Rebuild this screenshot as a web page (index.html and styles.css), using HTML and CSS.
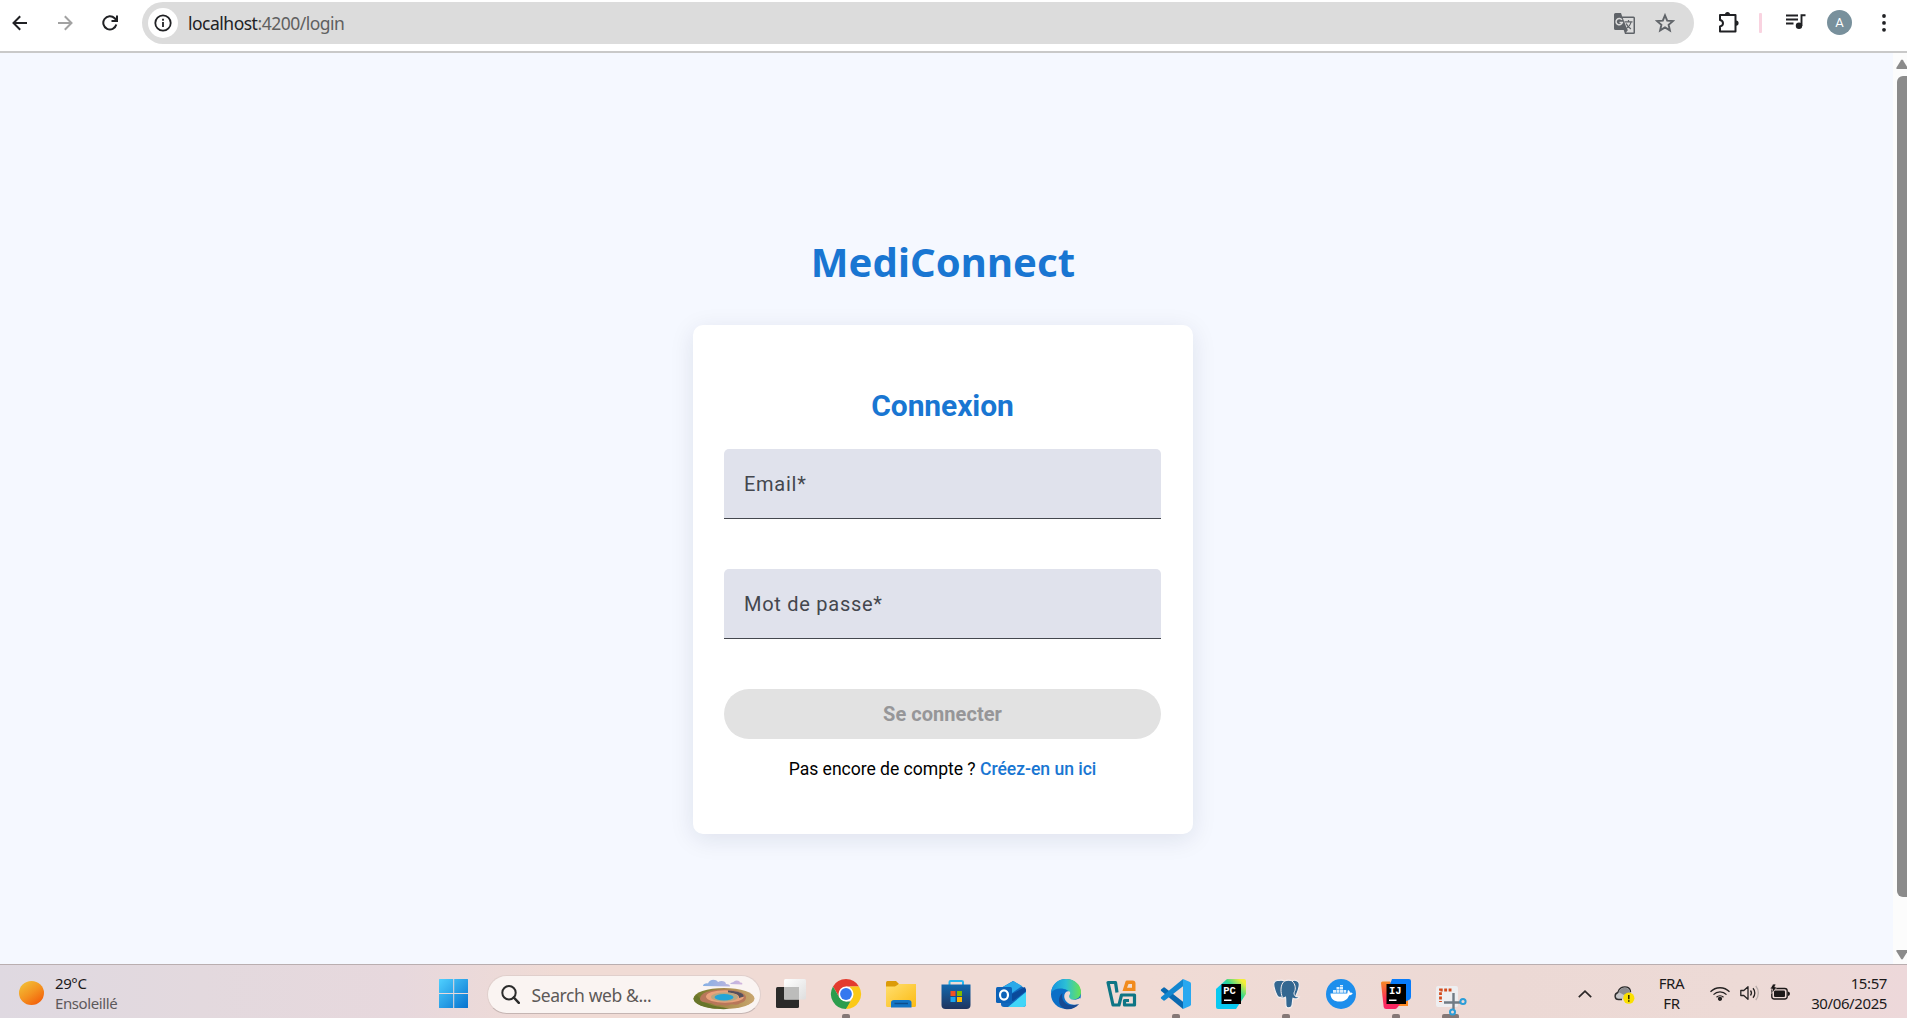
FILE: index.html
```html
<!DOCTYPE html>
<html lang="fr">
<head>
<meta charset="utf-8">
<title>MediConnect</title>
<link rel="stylesheet" href="styles.css">
</head>
<body>
<header class="toolbar">
  <div class="nav">
    <svg width="16" height="16" viewBox="0 0 16 16" class="line"><path d="M15 8H2M8.200 1.200L1.500 8l6.700 6.800"/></svg>
    <svg width="16" height="16" viewBox="0 0 16 16" class="line faded"><path d="M1 8h13M7.800 1.200L14.500 8l-6.700 6.800"/></svg>
    <svg width="16" height="16" viewBox="0 0 16 16" class="line"><path d="M14.300 9.500A6.600 6.600 0 1 1 12.700 3.300L14.500 5.200M15 .5v5.500H9.500" /></svg>
  </div>
  <div class="omnibox">
    <span class="site-info"><svg width="18" height="18" viewBox="0 0 18 18" fill="none" stroke="#202124" stroke-width="1.800"><circle cx="9" cy="9" r="7.700"/><path d="M9 8v5M9 4.800v1.900"/></svg></span>
    <span class="url"><b>localhost</b>:4200/login</span>
    <svg class="translate" width="21" height="21" viewBox="0 0 21 21"><path fill="#5f6368" d="M1.500 0H7l1.200 3.600h11.300A1.500 1.500 0 0 1 21 5.100v14.400a1.500 1.500 0 0 1-1.500 1.500H11l-1.300-4H1.500A1.500 1.500 0 0 1 0 15.500v-14A1.500 1.500 0 0 1 1.500 0z"/><path fill="#dcdcdc" d="M8.800 5h10.700v14.600H12l2-2.600-1-1z"/><path fill="none" stroke="#dcdcdc" stroke-width="1.500" d="M7.900 6.800A3.200 3.200 0 1 0 8.300 9.600H5.500"/><path fill="none" stroke="#5f6368" stroke-width="1.200" d="M10.500 8.800h8M14.500 7v1.800M17 9c-.6 3-2.500 5.200-5 6.500M12.200 10.500c1 2.500 2.500 4.300 4.800 5.500"/></svg>
    <svg class="star" width="20" height="20" viewBox="0 0 20 20"><path fill="none" stroke="#5f6368" stroke-width="1.900" d="M10 2.300l2.200 5.300 5.700.5-4.300 3.700 1.300 5.600-4.900-3-4.900 3 1.300-5.600L2.100 8.100l5.700-.5z"/></svg>
  </div>
  <div class="actions">
    <svg width="21" height="21" viewBox="0 0 21 21"><path fill="none" stroke="#202124" stroke-width="2" stroke-linejoin="round" d="M2 3h15.500v16.500H2v-5c4-1 4-5.500 0-6.500z"/><path fill="#202124" d="M7 2.500a2.500 2.500 0 0 1 5 0zM18 8.500a2.600 2.600 0 0 1 0 5.200z"/></svg>
    <i class="divider"></i>
    <svg class="media" width="20" height="15" viewBox="0 0 20 15"><path stroke="#202124" stroke-width="1.900" fill="none" d="M0 1.500h12M0 5.500h12M0 9.500h7.500M15.500 12V1.200H19.500"/><circle cx="13" cy="11.700" r="3.200" fill="#202124"/></svg>
    <span class="avatar">A</span>
    <svg class="dots" width="4" height="18" viewBox="0 0 4 18" fill="#202124"><circle cx="2" cy="2" r="1.900"/><circle cx="2" cy="8.900" r="1.900"/><circle cx="2" cy="15.800" r="1.900"/></svg>
  </div>
</header>

<div class="viewport">
  <main class="page">
    <h1 class="brand">MediConnect</h1>
    <form class="card">
      <h2 class="card-title">Connexion</h2>
      <label class="field">Email*</label>
      <label class="field">Mot de passe*</label>
      <button type="button" class="submit" disabled>Se connecter</button>
      <p class="signup">Pas encore de compte ? <a>Créez-en un ici</a></p>
    </form>
  </main>
  <div class="scrollbar">
    <svg width="11" height="10" viewBox="0 0 11 10"><path fill="#8b8b8b" d="M.5 8.500L5 1.200q1-1.400 2 0l4.500 7.300q.5 1.500-1 1.500H1Q-.2 9.700.5 8.500z"/></svg>
    <i class="thumb"></i>
    <svg width="11" height="10" viewBox="0 0 11 10"><path fill="#8b8b8b" d="M.5 1.500L5 8.800q1 1.400 2 0l4.500-7.300Q12 0 10.500 0H1Q-.2.300.5 1.500z"/></svg>
  </div>
</div>

<footer class="taskbar">
  <div class="weather">
    <i class="sun"></i>
    <div class="weather-text"><span>29°C</span><span class="muted">Ensoleillé</span></div>
  </div>

  <div class="apps">
    <svg class="app" viewBox="0 0 30 30"><defs><linearGradient id="win" x1="0" y1="0" x2="1" y2="1" gradientUnits="objectBoundingBox"><stop offset="0" stop-color="#4fd0ff"/><stop offset="1" stop-color="#0672cf"/></linearGradient></defs><path fill="url(#win)" d="M.5 0h13.700v14H0V.5zM15.200 0H28.500a.5.500 0 0 1 .5.500v13.500H15.200zM0 15h14.200v14H.5a.5.500 0 0 1-.5-.5zM15.200 15h13.800V28.500a.5.500 0 0 1-.5.500H15.200z"/></svg>

    <div class="search">
      <svg width="19" height="19" viewBox="0 0 19 19" fill="none" stroke="#2b2b2b"><circle cx="8" cy="7.700" r="6.700" stroke-width="2"/><path d="M12.800 12.500l5 5.300" stroke-width="2.500" stroke-linecap="round"/></svg>
      <span class="search-text">Search web &amp;...</span>
      <svg class="spring" width="62" height="31" viewBox="0 0 62 31">
        <defs><linearGradient id="cl" x1="0" x2="1"><stop offset="0" stop-color="#86b0e4"/><stop offset="1" stop-color="#d3b6dd"/></linearGradient><linearGradient id="land" x1="0" x2="1"><stop offset="0" stop-color="#6f7a28"/><stop offset=".5" stop-color="#a88a4a"/><stop offset="1" stop-color="#c9a66f"/></linearGradient></defs>
        <path fill="url(#cl)" d="M10 7c0-2 3-3 5-2.500C16 0 23-.5 25 3c3-2 8-1 8 2 3 0 4 1 4 2.500zM37 5c1-2 3-1 4-2.500 2-2 6-1 6 1 2 0 3 1 2 2z"/>
        <ellipse cx="31" cy="19.500" rx="30.500" ry="10.500" fill="url(#land)"/>
        <path fill="#68752a" d="M.5 19.500C1 27 18 31 36 30c-8-3-24-2-32-14z"/>
        <path fill="#b8775a" d="M7 20c0-6 10-9.500 23-9.500S54 14 53 19c-1 5-5 4-7 6-4 2-7-1-10 1-4 2-6-1-10 0-5 1-6-2-10-2-4-.5-9-1-9-4z"/>
        <ellipse cx="32" cy="17.500" rx="19" ry="6.200" fill="#e9a37c"/>
        <path fill="#55505c" d="M35 11.500c10 .3 16 3 16 6l-5 1.500c1-3-4-5-11-5.500z"/>
        <ellipse cx="31.500" cy="18" rx="13.500" ry="4.500" fill="#b7a782"/>
        <ellipse cx="31" cy="18.200" rx="9.500" ry="3.200" fill="#23a5d8"/>
      </svg>
    </div>

    <svg class="app" viewBox="0 0 30 30"><defs><linearGradient id="tv" x1="0" y1="0" x2="1" y2="1"><stop offset="0" stop-color="#fff"/><stop offset="1" stop-color="#dedede"/></linearGradient></defs><rect x="0" y="8" width="23" height="21" rx="1.500" fill="#2a2a29"/><rect x="8" y="0" width="22" height="20.500" rx="1.500" fill="url(#tv)"/><path fill="#bcbcbb" d="M8 8h15v12.500H8z"/></svg>

    <span class="slot"><svg class="app" viewBox="0 0 30 30"><path fill="#e33b2e" d="M2 7.500a15 15 0 0 1 26 0H15l-6.500 11z"/><path fill="#2c9d4d" d="M2 7.500l6.500 11.200L15 22.500h6.500L15 30A15 15 0 0 1 2 7.500z"/><path fill="#fbc917" d="M28 7.500A15 15 0 0 1 15 30l6.500-11.200L19 7.500z"/><circle cx="15" cy="15" r="7.500" fill="#fff"/><circle cx="15" cy="15" r="5.900" fill="#3478ef"/></svg><i class="dot"></i></span>

    <svg class="app" viewBox="0 0 30 30"><defs><linearGradient id="fo" x1="0" y1="0" x2="1" y2="1"><stop offset="0" stop-color="#ffdf70"/><stop offset="1" stop-color="#fcbb13"/></linearGradient></defs><path fill="#dc9b08" d="M0 3.500Q0 2 1.500 2H10l3 3-3 4H0z"/><path fill="url(#fo)" d="M0 7.500h9L13 5h17v21.500q0 1.500-1.500 1.500h-27Q0 28 0 26.500z"/><path fill="#1475c4" d="M5 28.500v-4.800Q5 21 8 21h14.500q3 0 3 2.700v4.800z"/><path stroke="#0d4e8c" stroke-width="1.500" d="M8.500 24.500h13.500"/></svg>

    <svg class="app" viewBox="0 0 30 30"><defs><linearGradient id="st" x1="0" y1="0" x2="0" y2="1"><stop offset="0" stop-color="#1268ae"/><stop offset="1" stop-color="#20345f"/></linearGradient></defs><path fill="none" stroke="#29b6ee" stroke-width="2" d="M8.500 7V3Q8.500 2 9.500 2h11Q22 2 22 3v4"/><path fill="url(#st)" d="M.5 5.500h29V26q0 4-4 4H4.500q-4 0-4-4z"/><path fill="#f25022" d="M9.500 12h5v5h-5z"/><path fill="#7fba00" d="M16 12h5v5h-5z"/><path fill="#1aa5ef" d="M9.500 18h5v5h-5z"/><path fill="#ffb900" d="M16 18h5v5h-5z"/></svg>

    <svg class="app" viewBox="0 0 30 30"><path fill="#1068bd" d="M5 9l12-7 13 8v15q0 3-3 3H8q-3 0-3-3z"/><path fill="#2ba9e9" d="M5 9l12.500-7L26 7 12 17z"/><path fill="#0a4a9b" d="M8 19L29 8l1 4-13 10z"/><path fill="#40d5f8" d="M12 28L30 13v12q0 3-3 3z"/><rect x="0" y="8" width="16" height="16" rx="1.500" fill="#0c62b8"/><ellipse cx="8" cy="16" rx="4" ry="4.600" fill="none" stroke="#fff" stroke-width="2.200"/></svg>

    <svg class="app" viewBox="0 0 30 30"><defs><linearGradient id="ed" x1="0" y1=".4" x2="1" y2=".4"><stop offset="0" stop-color="#1492df"/><stop offset=".5" stop-color="#2cbfd6"/><stop offset="1" stop-color="#69e351"/></linearGradient></defs><circle cx="15" cy="15" r="15" fill="#0b6fc7"/><path fill="url(#ed)" d="M0 14C1 4 8 0 15 0c9 0 15 6 15 13 0 5-4 7.500-8 7.500-3.500 0-5-1.500-4-3 1.500-2 1-5-2-6.500C11 8.500 3 9 0 14z"/><path fill="#174a93" d="M11.500 14c-2 8 4 13 11 12 3-.3 5-1.500 5.500-1C25 29 20 31 14 30 6 27 7 17 11.500 14z"/><path fill="#efdbd5" d="M18.500 12.500c2 2-1 4-.3 5.800 1.300 3.200 7 3.200 10.800.7 1 .5 1 3.500-.8 5.200-3 2-8 2-11.200-.2-4-3-5-8-2-11 1-1 2.500-1 3.500-.5z"/></svg>

    <svg class="app" viewBox="0 0 30 30" fill="none" stroke-width="3.200" stroke-linejoin="round"><path stroke="#0e7585" d="M11 13.500L9.500 3.500H2L7 26H13L15.500 16H28.500V26H18.500V21.500H23"/><path fill="#f18b1d" d="M19.500 2.500Q19.800 1.500 21 1.500h5.500Q29.500 1.500 29.500 4.500v7.500H16.500z"/><path fill="#f3dfd3" d="M22.500 5h3.500v3.800h-5z"/></svg>

    <span class="slot"><svg class="app" viewBox="0 0 30 30"><path fill="#0a69b0" d="M0 10.500L2.500 8.600Q3.200 8.100 4 8.700l18 14V30L.2 12Q-.5 11.300 0 10.500z"/><path fill="#1387d0" d="M0 19.500l2.500 1.900q.7.500 1.500-.1l18-14V0L.2 18Q-.5 18.700 0 19.500z"/><path fill="#29a8f0" d="M22 0l7 3q1 .5 1 1.700v20.600q0 1.200-1 1.700l-7 3z"/></svg><i class="dot"></i></span>

    <svg class="app" viewBox="0 0 30 30"><defs><linearGradient id="pc" x1="0" y1="1" x2="1" y2="0"><stop offset=".45" stop-color="#08c9f1"/><stop offset=".65" stop-color="#35d78f"/><stop offset=".9" stop-color="#f3ed38"/></linearGradient></defs><path fill="url(#pc)" d="M11 0h17q2 0 2 2v13L20 30H2q-2 0-2-2V10z"/><path d="M5.500 5H25v20H5.500z"/><text x="7.300" y="14.600" class="ide">PC</text><path fill="#fff" d="M8 20.500h7.500V22H8z"/></svg>

    <span class="slot"><svg class="app" viewBox="0 0 30 30"><path fill="#336791" stroke="#f4eeee" stroke-width="1.200" d="M8 1.500c2-.7 4-.3 5.500.5C16 .8 19 1 21 1.700c3-1 7-.3 7.300 3.300.2 4-2 9-3.600 12.200 1.300.8 3.300.5 3.800.8-1 2-4.500 2.500-6.500 1.300-.5 1.700-.5 5-1 7-.7 3-5.500 3.500-6 .5-.5-3 0-6-.5-8.500-3 1.700-5.500.5-4-.3-3 1.500-4.500-.8-5.800-4.500C3.500 10 2 6 3 3.700 4 1.500 6 1 8 1.500z"/><path fill="none" stroke="#f4eeee" stroke-width="1" d="M11.500 18.500C9.500 14 9 6 13 2.500M21 2c3.500 3 4 8 2.500 10.500-1 2-.5 3.500 1 4.700"/></svg><i class="dot"></i></span>

    <svg class="app" viewBox="0 0 30 30"><circle cx="15" cy="15" r="15" fill="#1d8eec"/><path fill="#fff" d="M4.500 14.500h16.700c.5-1 .2-2.200.8-3.500 1.300.6 1.800 1.500 2 2.700 1-.2 2 0 2.700.5-.7 1.500-2 2-3.500 2-1.800 4.500-5 6.300-9.700 6.300-5.500 0-9-2.500-9-8z"/><path fill="#fff" d="M7 11h3v2.800H7zM10.500 11h3v2.800h-3zM14 11h3v2.800h-3zM10.500 8h3v2.600h-3zM14 8h3v2.600h-3zM17.500 11h2.700v2.800h-2.700zM14 6h3v1.500h-3z" opacity=".85"/></svg>

    <span class="slot"><svg class="app" viewBox="0 0 30 30"><defs><linearGradient id="ij" x1="0" y1="0" x2="0" y2="1"><stop offset="0" stop-color="#f58a27"/><stop offset=".6" stop-color="#fd3252"/><stop offset="1" stop-color="#fb2366"/></linearGradient></defs><path fill="#ff8a22" d="M18 18h9v9H15z"/><path fill="url(#ij)" d="M0 4q0-1.500 1.500-1.500H9L20 24l-4 5q-.8 1-2 1H5q-2 0-2.300-2z"/><path fill="#087cfa" d="M11 0h17q2 0 2 2v16q0 2-2 3l-5 2L8 8z"/><path d="M5.500 5H25v20H5.500z"/><text x="8" y="14.600" class="ide">IJ</text><path fill="#fff" d="M8 20.500h7.500V22H8z"/></svg><i class="dot"></i></span>

    <span class="slot"><i class="dot wide"></i><svg class="app snip" viewBox="0 0 30 30"><rect x="0" y="7" width="22" height="21" rx="2" fill="#eeeef0"/><path fill="none" stroke="#d44b1c" stroke-width="2.800" stroke-dasharray="2.900 1.500" d="M15.500 11H4.500v12"/><path stroke="#707b84" stroke-width="2.400" d="M17.500 14v16M8 23.500h17"/><g fill="none" stroke="#2b9dd8" stroke-width="2"><circle cx="27" cy="22.500" r="2.600"/><circle cx="16.500" cy="33" r="2.500"/></g></svg></span>
  </div>

  <div class="tray">
    <svg class="caret" width="14" height="8" viewBox="0 0 14 8"><path d="M.8 7.200L7 1.200l6.200 6" fill="none" stroke="#2b2727" stroke-width="1.700"/></svg>
    <svg class="cloud" width="21" height="18" viewBox="0 0 21 18"><path fill="#c7c6c8" stroke="#2c2b2b" stroke-width="1.400" d="M8 13.500H4.500C.5 13.500-.2 8 3.800 6.500 5 2 9 0 13 1.200c2.500.8 3.500 3 3.500 5"/><path fill="#8d8d90" d="M4.500 6C6 2.500 10 1.200 13 2.200c2 .8 3 2.500 3 5L10 9z"/><circle cx="14.800" cy="12.200" r="5.600" fill="#fbe000"/><path stroke="#292600" stroke-width="1.500" d="M14.800 9v4.200M14.800 14.200v1.500"/></svg>
    <div class="lang"><span>FRA</span><span>FR</span></div>
    <svg class="wifi" width="20" height="15" viewBox="0 0 20 15" fill="none" stroke="#252222" stroke-width="1.300"><path d="M.5 5.800a13.200 13.200 0 0 1 19 0M3.500 8.600a9 9 0 0 1 13 0M6.500 11.300a5 5 0 0 1 7 0"/><circle cx="10" cy="12.800" r="1.500" fill="#252222"/></svg>
    <svg class="sound" width="20" height="16" viewBox="0 0 20 16" fill="none" stroke="#252222" stroke-width="1.300"><path stroke-linejoin="round" d="M.8 5.500h3L8 1.700v12.600l-4.200-3.800h-3z"/><path d="M10.500 5.500a4 4 0 0 1 0 5M13 3.300a7 7 0 0 1 0 9.400"/><path stroke="#b7acaa" d="M15.800 1a11 11 0 0 1 0 14"/></svg>
    <svg class="battery" width="21" height="16" viewBox="0 0 21 16"><rect x="1.800" y="4.500" width="15.400" height="10.500" rx="2.500" fill="none" stroke="#1c1919" stroke-width="1.300"/><rect x="4" y="6.500" width="11" height="6.500" rx="1" fill="#1c1919"/><path fill="#1c1919" d="M18 7.500q2 .3 2 2.200t-2 2.300z"/><path fill="#1c1919" stroke="#ecd9d5" stroke-width=".7" d="M3 0h3L4.800 3h2.400L1.800 9.500 2.500 5H0z"/></svg>
    <div class="clock"><span>15:57</span><span>30/06/2025</span></div>
  </div>
</footer>
</body>
</html>
```
FILE: styles.css
```css
* { box-sizing: border-box; }

body {
  margin: 0;
  height: 1018px;
  overflow: hidden;
  display: flex;
  flex-direction: column;
  font-family: "Noto Sans", "Open Sans", sans-serif;
}

svg { display: block; flex: none; }

/* Browser toolbar */
.toolbar {
  height: 53px;
  flex: none;
  display: flex;
  align-items: flex-start;
  background: #fff;
  border-bottom: 2px solid #c9c9c9;
}
.nav {
  width: 142px;
  height: 45px;
  padding-left: 12px;
  display: flex;
  align-items: center;
  gap: 29px;
}
.line { fill: none; stroke: #202124; stroke-width: 2; }
.faded { stroke: #a2a2a2; }
.omnibox {
  width: 1552px;
  height: 42px;
  margin-top: 2px;
  padding: 0 19px 0 6px;
  display: flex;
  align-items: center;
  border-radius: 21px;
  background: #dcdcdc;
}
.site-info {
  width: 30px;
  height: 30px;
  display: flex;
  align-items: center;
  justify-content: center;
  border-radius: 50%;
  background: #fff;
}
.url {
  flex: 1;
  padding-left: 10px;
  color: #606060;
  font-size: 17.5px;
  letter-spacing: -0.5px;
}
.url b { font-weight: 400; color: #202124; }
.star { margin: 0 0 0 20px; }
.actions {
  height: 45px;
  padding-left: 24px;
  display: flex;
  align-items: center;
}
.divider { width: 3px; height: 20px; margin: 0 24px 0 20px; background: #f9d3e0; border-radius: 1px; }
.media { margin-top: -2px; }
.avatar {
  width: 25px;
  height: 25px;
  margin: 0 30px 0 21px;
  border-radius: 50%;
  background: #78909c;
  color: #fff;
  font: 13px/25px Roboto, sans-serif;
  text-align: center;
}

/* Page */
.viewport { flex: 1; display: flex; background: #f5f8ff; }
.page {
  flex: 1;
  padding: 194px 7px 0 0;
  display: flex;
  flex-direction: column;
  align-items: center;
}
.brand {
  height: 29px;
  margin: 0 0 49px;
  color: #1976d2;
  font-size: 40px;
  line-height: 29px;
  letter-spacing: .1px;
  font-weight: 700;
}
.card {
  width: 500px;
  height: 509px;
  padding: 61px 32px 0 31px;
  display: flex;
  flex-direction: column;
  border-radius: 10px;
  background: #fff;
  box-shadow: 0 5px 25px rgba(20, 30, 70, .1);
  font-family: Roboto, sans-serif;
}
.card-title {
  margin: 0 0 23px;
  height: 40px;
  line-height: 40px;
  color: #1976d2;
  font-size: 30px;
  font-weight: 700;
  letter-spacing: -0.1px;
  text-align: center;
}
.field {
  height: 70px;
  margin-bottom: 50px;
  padding-left: 20px;
  border-bottom: 1px solid #44474e;
  border-radius: 5px 5px 0 0;
  background: #e0e2ec;
  color: #44474e;
  font-size: 20px;
  line-height: 70px;
  letter-spacing: .73px;
}
.submit {
  height: 50px;
  flex: none;
  border: 0;
  border-radius: 25px;
  background: #e2e2e2;
  color: #969698;
  font: 700 20px/49px Roboto, sans-serif;
  letter-spacing: .05px;
}
.signup { margin: 19px 0 0; text-align: center; font-size: 17.6px; line-height: 22px; letter-spacing: -.04px; color: #000; }
.signup a { color: #1976d2; font-weight: 500; }

.scrollbar {
  width: 14px;
  padding: 6px 0 4px 3px;
  display: flex;
  flex-direction: column;
  background: #fcfcfc;
}
.thumb { width: 20px; height: 821px; margin: 7px 0 53px 1px; border-radius: 6px; background: #8b8b8b; }

/* Taskbar */
.taskbar {
  height: 54px;
  flex: none;
  display: flex;
  align-items: flex-start;
  border-top: 1px solid #b9aeb0;
  background: linear-gradient(90deg, #dfd9e1 0, #e3d9de 200px, #e7d8dd 400px, #f0dbd5 560px, #f0dbd5 1150px, #ecd9d5 1500px, #eddad6 1750px, #edd8da 1907px);
  color: #1c1a1b;
  overflow: hidden;
}
.weather { width: 439px; padding: 8px 0 0 19px; display: flex; gap: 11px; }
.sun { width: 25px; height: 24px; margin-top: 8px; border-radius: 50%; background: linear-gradient(145deg, #f2bd35 10%, #f49320 50%, #f3640c 85%); }
.weather-text, .lang, .clock { display: flex; flex-direction: column; font-size: 15px; line-height: 20px; letter-spacing: -.4px; }
.muted { color: #5c585b; }
.apps { display: flex; align-items: flex-start; gap: 25px; padding-top: 14px; }
.app { width: 30px; height: 30px; overflow: visible; }
.slot { width: 30px; display: flex; flex-direction: column; align-items: center; gap: 5px; }
.dot { width: 8px; height: 5px; border-radius: 2px; background: #857876; }
.dot.wide { width: 17px; margin-top: 35px; }
.snip { margin-top: -45px; }
.ide { font: 700 10.500px "Liberation Mono", monospace; fill: #fff; }
.search {
  width: 274px;
  height: 39px;
  margin: -4px -10px 0 -7.5px;
  padding-left: 13px;
  display: flex;
  align-items: center;
  border-radius: 20px;
  border: 1px solid #e0cfcc;
  border-bottom-color: #c5b5b3;
  background: #faf4f2;
}
.search-text { width: 173px; padding-left: 12px; color: #5d5958; font-size: 17.500px; letter-spacing: -.4px; white-space: nowrap; }
.tray { margin-left: auto; padding-right: 20px; display: flex; align-items: flex-start; }
.caret { margin: 25px 22px 0 0; }
.cloud { margin: 21px 23px 0 0; }
.lang { width: 27px; margin: 8px 25px 0 0; text-align: center; align-items: center; }
.wifi { margin: 21px 10px 0 0; }
.sound { margin: 20px 10px 0 0; }
.battery { margin: 19px 18px 0 0; }
.clock { width: 78px; margin-top: 8px; align-items: flex-end; white-space: nowrap; }
```
